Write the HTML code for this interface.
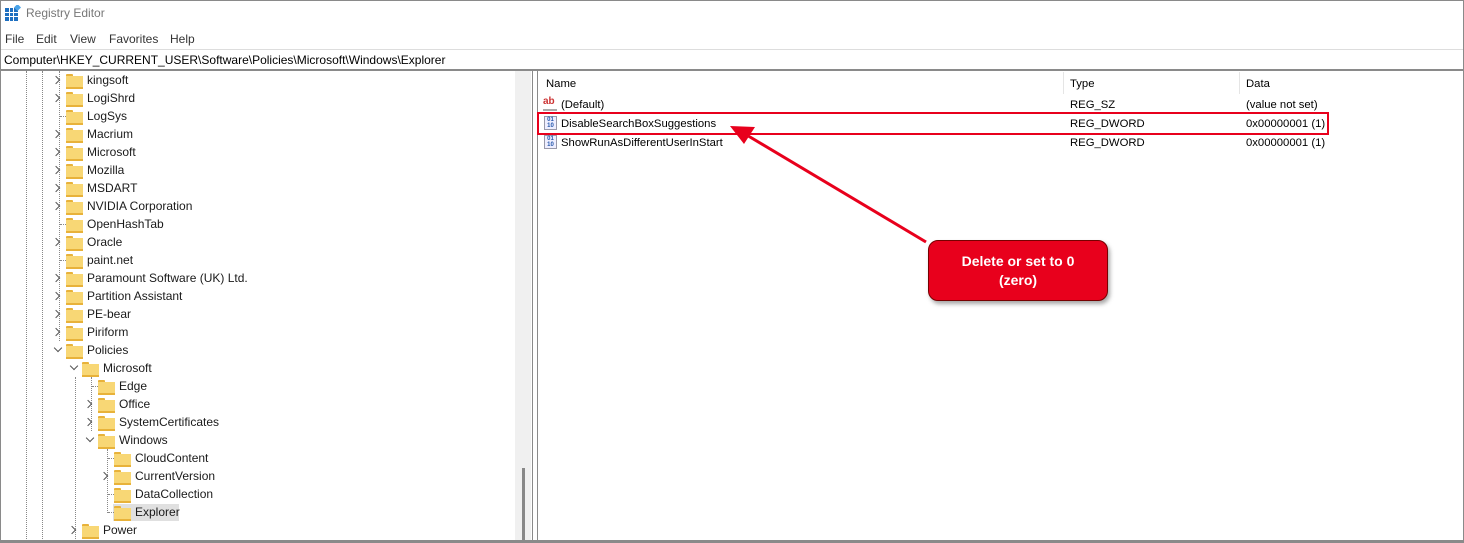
<!DOCTYPE html>
<html><head><style>
*{margin:0;padding:0;box-sizing:border-box}
body{width:1464px;height:543px;background:#fff;font-family:"Liberation Sans",sans-serif;font-size:12px;color:#000;position:relative;overflow:hidden}
.a{position:absolute;white-space:nowrap}
.l{font-size:11.3px;margin-top:1px}
.fold{position:absolute;width:17px;height:13px}
.fold:before{content:"";position:absolute;left:0;top:0;width:7px;height:3px;background:#e8b23a;border-radius:1px 1px 0 0}
.fold:after{content:"";position:absolute;left:0;top:2px;width:17px;height:11px;background:#f8d775;border-bottom:2px solid #e8b23a}
.chev{position:absolute;width:6px;height:6px;border-right:1px solid #555;border-bottom:1px solid #555}
.r{transform:rotate(-45deg)}
.d{transform:rotate(45deg)}
.dot{position:absolute;height:0;border-top:1px dotted #888}
.vd{position:absolute;width:0;border-left:1px dotted #888}
</style></head><body>
<div class="a" style="left:0;top:0;width:1464px;height:543px;border:1px solid #8a8a8a"></div>
<svg class="a" style="left:5px;top:5px" width="16" height="16"><rect x="0" y="3" width="13" height="13" fill="#1e6fc0"/><g stroke="#fff" stroke-width="1"><line x1="4.5" y1="3" x2="4.5" y2="16"/><line x1="8.5" y1="3" x2="8.5" y2="16"/><line x1="0" y1="7.5" x2="13" y2="7.5"/><line x1="0" y1="11.5" x2="13" y2="11.5"/></g><rect x="10" y="0" width="5" height="5" fill="#4aa3e8" transform="rotate(45 12.5 2.5)"/></svg>
<div class="a" style="left:26px;top:6px;color:#777;font-size:12px">Registry Editor</div>
<div class="a" style="left:5px;top:32px;color:#333">File</div>
<div class="a" style="left:36px;top:32px;color:#333">Edit</div>
<div class="a" style="left:70px;top:32px;color:#333">View</div>
<div class="a" style="left:109px;top:32px;color:#333">Favorites</div>
<div class="a" style="left:170px;top:32px;color:#333">Help</div>
<div class="a" style="left:1px;top:49px;width:1462px;height:1px;background:#ddd"></div>
<div class="a" style="left:4px;top:53px">Computer\HKEY_CURRENT_USER\Software\Policies\Microsoft\Windows\Explorer</div>
<div class="a" style="left:1px;top:69px;width:1462px;height:2px;background:#8a8a8a"></div>
<!-- tree -->
<div class="a" style="left:113px;top:504px;width:66px;height:17px;background:#e0e0e0"></div>
<div class="vd" style="left:26px;top:71px;height:470px"></div>
<div class="vd" style="left:42px;top:71px;height:470px"></div>
<div class="vd" style="left:59px;top:71px;height:270px"></div>
<div class="vd" style="left:75px;top:377px;height:164px"></div>
<div class="vd" style="left:91px;top:377px;height:54px"></div>
<div class="vd" style="left:107px;top:449px;height:64px"></div>
<div id="tree"></div>
<script>
var items=[["kingsoft",0,"r"],["LogiShrd",0,"r"],["LogSys",0,""],["Macrium",0,"r"],["Microsoft",0,"r"],["Mozilla",0,"r"],["MSDART",0,"r"],["NVIDIA Corporation",0,"r"],["OpenHashTab",0,""],["Oracle",0,"r"],["paint.net",0,""],["Paramount Software (UK) Ltd.",0,"r"],["Partition Assistant",0,"r"],["PE-bear",0,"r"],["Piriform",0,"r"],["Policies",0,"d"],["Microsoft",1,"d"],["Edge",2,""],["Office",2,"r"],["SystemCertificates",2,"r"],["Windows",2,"d"],["CloudContent",3,""],["CurrentVersion",3,"r"],["DataCollection",3,""],["Explorer",3,""],["Power",1,"r"]];
var h="";
items.forEach(function(it,i){var y=80+18*i,o=it[1]*16;
if(it[2]=="r")h+='<div class="chev r" style="left:'+(53+o)+'px;top:'+(y-3)+'px"></div>';
else if(it[2]=="d")h+='<div class="chev d" style="left:'+(55+o)+'px;top:'+(y-5)+'px"></div>';
else h+='<div class="dot" style="left:'+(60+o)+'px;top:'+y+'px;width:6px"></div>';
h+='<div class="fold" style="left:'+(66+o)+'px;top:'+(y-6)+'px"></div>';
h+='<div class="a" style="left:'+(87+o)+'px;top:'+(y-7)+'px;color:#1a1a1a">'+it[0]+'</div>';});
document.getElementById("tree").outerHTML=h;
</script>
<div class="a" style="left:515px;top:71px;width:16px;height:470px;background:#f0f0f0"></div>
<div class="a" style="left:522px;top:468px;width:3px;height:73px;background:#888"></div>
<div class="a" style="left:532px;top:71px;width:1px;height:470px;background:#8a8a8a"></div>
<div class="a" style="left:537px;top:71px;width:1px;height:470px;background:#8a8a8a"></div>
<div class="a" style="left:1px;top:540px;width:1462px;height:2px;background:#8a8a8a"></div>
<!-- list -->
<div class="a l" style="left:546px;top:77px">Name</div>
<div class="a" style="left:1063px;top:72px;width:1px;height:22px;background:#e5e5e5"></div>
<div class="a l" style="left:1070px;top:77px">Type</div>
<div class="a" style="left:1239px;top:72px;width:1px;height:22px;background:#e5e5e5"></div>
<div class="a l" style="left:1246px;top:77px">Data</div>
<div class="a" style="left:543px;top:97px;width:14px;height:14px;color:#c33;font-size:10px;font-weight:bold;line-height:10px;border-bottom:2px solid #aaa">ab</div>
<div class="a l" style="left:561px;top:98px">(Default)</div>
<div class="a l" style="left:1070px;top:98px">REG_SZ</div>
<div class="a l" style="left:1246px;top:98px">(value not set)</div>
<div class="a" style="left:544px;top:116px;width:13px;height:14px;border:1px solid #99a;background:#eef;color:#2255aa;font-size:6px;line-height:6px;font-weight:bold;text-align:center">01<br>10</div>
<div class="a l" style="left:561px;top:117px">DisableSearchBoxSuggestions</div>
<div class="a l" style="left:1070px;top:117px">REG_DWORD</div>
<div class="a l" style="left:1246px;top:117px">0x00000001 (1)</div>
<div class="a" style="left:544px;top:135px;width:13px;height:14px;border:1px solid #99a;background:#eef;color:#2255aa;font-size:6px;line-height:6px;font-weight:bold;text-align:center">01<br>10</div>
<div class="a l" style="left:561px;top:136px">ShowRunAsDifferentUserInStart</div>
<div class="a l" style="left:1070px;top:136px">REG_DWORD</div>
<div class="a l" style="left:1246px;top:136px">0x00000001 (1)</div>
<div class="a" style="left:537px;top:112px;width:792px;height:23px;border:2px solid #e8001c"></div>
<svg class="a" style="left:0;top:0" width="1464" height="543"><line x1="926" y1="242" x2="745" y2="134" stroke="#e8001c" stroke-width="3"/><polygon points="730,126 755,127 744,144" fill="#e8001c"/></svg>
<div class="a" style="left:928px;top:240px;width:180px;height:61px;background:#e8001c;border:1px solid #700;border-radius:10px;box-shadow:2px 3px 4px rgba(0,0,0,.35);color:#fff;font-weight:bold;font-size:14px;text-align:center;line-height:19px;padding-top:11px">Delete or set to 0<br>(zero)</div>
</body></html>
